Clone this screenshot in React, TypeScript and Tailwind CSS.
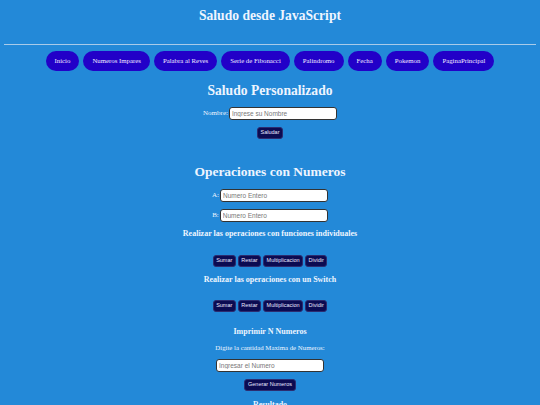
const nav = [
  "Inicio",
  "Numeros Impares",
  "Palabra al Reves",
  "Serie de Fibonacci",
  "Palindromo",
  "Fecha",
  "Pokemon",
  "PaginaPrincipal",
];

const ops = ["Sumar", "Restar", "Multiplicacion", "Dividir"];

const serif = "font-['Liberation_Serif',serif]";
const sans = "font-['Liberation_Sans',Arial,sans-serif]";

function DarkButton({ label }: { label: string }) {
  return (
    <button
      className={`${sans} h-[12px] px-[2.5px] rounded-[3px] bg-[#0b0b52] border border-[#2c2c70] text-[5.5px] leading-none text-[#e8e8ff]`}
    >
      {label}
    </button>
  );
}

function TextInput({ placeholder }: { placeholder: string }) {
  return (
    <input
      placeholder={placeholder}
      className={`${sans} w-[108px] h-[13px] px-[2px] rounded-[3px] bg-white border border-[#333] text-[6.5px] leading-none placeholder:text-[#777] outline-none`}
    />
  );
}

export default function App() {
  return (
    <div className={`${serif} w-[540px] h-[405px] overflow-hidden bg-[#2389d8] flex flex-col items-center text-[#eef5ff]`}>
      {/* Header */}
      <h1 className="mt-[7px] text-[13.6px] font-bold leading-[18px]">Saludo desde JavaScript</h1>
      <hr className="mt-[19px] w-[532px] border-t border-[#a9cbe9]" />

      <nav className="mt-[6px] flex gap-[4px]">
        {nav.map((item) => (
          <button
            key={item}
            className="h-[20px] px-[9px] rounded-full bg-[#2200c8] text-[6.8px] leading-none text-[#f0eaff]"
          >
            {item}
          </button>
        ))}
      </nav>

      {/* Saludo */}
      <h2 className="mt-[11px] text-[13.6px] font-bold leading-[18px]">Saludo Personalizado</h2>
      <div className="mt-[7px] flex items-center gap-[1px]">
        <label className="text-[7px] leading-none">Nombre:</label>
        <TextInput placeholder="Ingrese su Nombre" />
      </div>
      <div className="mt-[7px] flex">
        <DarkButton label="Saludar" />
      </div>

      {/* Operaciones */}
      <h2 className="mt-[24px] text-[13.5px] font-bold leading-[18px]">Operaciones con Numeros</h2>
      <div className="mt-[8px] flex items-center gap-[1px]">
        <label className="text-[7px] leading-none">A:</label>
        <TextInput placeholder="Numero Entero" />
      </div>
      <div className="mt-[7px] flex items-center gap-[1px]">
        <label className="text-[7px] leading-none">B:</label>
        <TextInput placeholder="Numero Entero" />
      </div>
      <h3 className="mt-[6px] text-[8px] font-bold leading-[12px]">
        Realizar las operaciones con funciones individuales
      </h3>
      <div className="mt-[15px] flex gap-[2px]">
        {ops.map((op) => (
          <DarkButton key={op} label={op} />
        ))}
      </div>
      <h3 className="mt-[7px] text-[8px] font-bold leading-[12px]">
        Realizar las operaciones con un Switch
      </h3>
      <div className="mt-[14px] flex gap-[2px]">
        {ops.map((op) => (
          <DarkButton key={op} label={op} />
        ))}
      </div>

      {/* Imprimir */}
      <h3 className="mt-[14px] text-[8px] font-bold leading-[12px]">Imprimir N Numeros</h3>
      <p className="mt-[5px] text-[6.8px] leading-[10px]">Digite la cantidad Maxima de Numeros:</p>
      <div className="mt-[6px] flex">
        <TextInput placeholder="Ingresar el Numero" />
      </div>
      <div className="mt-[7px] flex">
        <DarkButton label="Generar Numeros" />
      </div>
      <h3 className="mt-[8px] text-[8px] font-bold leading-[12px]">Resultado</h3>
    </div>
  );
}
